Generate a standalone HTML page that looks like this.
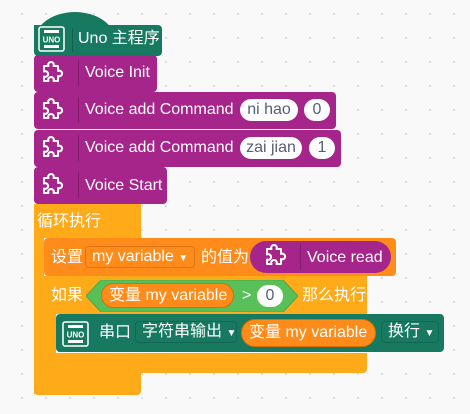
<!DOCTYPE html>
<html><head><meta charset="utf-8">
<style>
body{margin:0;width:470px;height:414px;background:#f9f9f9;position:relative;overflow:hidden;
font-family:"Liberation Sans","Noto Sans CJK SC",sans-serif;font-size:16px;color:#fff}
.a{position:absolute}
.t{position:absolute;white-space:nowrap;line-height:20px}
.pill{position:absolute;background:#fff;color:#575e75;border-radius:12px;text-align:center;line-height:22px;height:22px;font-size:16px}
.sep{position:absolute;width:1px;background:rgba(0,0,0,.2)}
.dd{position:absolute;border:1px solid rgba(0,0,0,.15);border-radius:4px;line-height:20px;height:20px;padding:0 6px;white-space:nowrap}
.dd small{font-size:10px}
.dot{background-image:radial-gradient(#ddd 1px,transparent 1.2px);background-size:24px 24px}
</style></head><body>
<div class="a dot" style="left:0;top:0;width:470px;height:414px;background-position:10px 2px"></div>

<!-- hat -->
<div class="a" style="left:34px;top:12px;width:82px;height:30px;background:#177a60;border-radius:50% 50% 0 0/100% 100% 0 0"></div>
<div class="a" style="left:34px;top:25px;width:128px;height:31px;background:#177a60;border-radius:0 4px 4px 4px"></div>
<svg class="a" style="left:38px;top:26px" width="27" height="26" viewBox="0 0 27 26"><rect x="1" y="1" width="25" height="24" rx="2" fill="none" stroke="#fff" stroke-width="1.5"/><rect x="6" y="4" width="15" height="3" fill="#fff"/><rect x="6" y="19" width="15" height="3" fill="#fff"/><text x="13.5" y="16.5" font-size="8" font-weight="bold" fill="#fff" text-anchor="middle" font-family="Liberation Sans">UNO</text></svg>
<div class="sep" style="left:72px;top:28px;height:24px"></div>
<div class="t" style="left:78px;top:29px">Uno 主程序</div>

<!-- purple blocks -->
<div class="a" style="left:34px;top:55px;width:123px;height:37px;background:#a5258a;border-radius:4px"></div>
<div class="a" style="left:34px;top:92px;width:302px;height:37px;background:#a5258a;border-radius:4px"></div>
<div class="a" style="left:34px;top:130px;width:307px;height:37px;background:#a5258a;border-radius:4px"></div>
<div class="a" style="left:34px;top:167px;width:133px;height:37px;background:#a5258a;border-radius:4px"></div>

<div class="sep" style="left:78px;top:60px;height:26px"></div>
<div class="sep" style="left:78px;top:97px;height:26px"></div>
<div class="sep" style="left:78px;top:135px;height:26px"></div>
<div class="sep" style="left:78px;top:172px;height:26px"></div>
<div class="t" style="left:85px;top:63px">Voice Init</div>
<div class="t" style="left:85px;top:100px">Voice add Command</div>
<div class="pill" style="left:240px;top:99px;width:58px">ni hao</div>
<div class="pill" style="left:304px;top:99px;width:26px">0</div>
<div class="t" style="left:85px;top:138px">Voice add Command</div>
<div class="pill" style="left:240px;top:137px;width:62px">zai jian</div>
<div class="pill" style="left:309px;top:137px;width:26px">1</div>
<div class="t" style="left:85px;top:176px">Voice Start</div>

<!-- loop -->
<div class="a" style="left:34px;top:204px;width:107px;height:34px;background:#ffab19"></div>
<div class="a" style="left:34px;top:204px;width:10px;height:190px;background:#ffab19"></div>
<div class="a" style="left:34px;top:373px;width:107px;height:22px;background:#ffab19;border-radius:0 0 4px 4px"></div>
<div class="t" style="left:37px;top:212px">循环执行</div>

<!-- set -->
<div class="a" style="left:44px;top:238px;width:352px;height:38px;background:#ff8c1a;border-radius:4px"></div>
<div class="t" style="left:51px;top:248px">设置</div>
<div class="dd" style="left:85px;top:246px;width:96px">my variable <small>▼</small></div>
<div class="t" style="left:201px;top:248px">的值为</div>
<div class="a" style="left:250px;top:241px;width:141px;height:32px;background:#a5258a;border-radius:16px"></div>
<div class="sep" style="left:300px;top:244px;height:26px"></div>
<div class="t" style="left:307px;top:248px">Voice read</div>

<!-- if -->
<div class="a" style="left:44px;top:276px;width:323px;height:38px;background:#ffab19"></div>
<div class="a" style="left:44px;top:276px;width:12px;height:97px;background:#ffab19"></div>
<div class="a" style="left:44px;top:353px;width:323px;height:20px;background:#ffab19;border-radius:0 0 4px 4px"></div>
<div class="t" style="left:51px;top:286px">如果</div>
<svg class="a" style="left:86px;top:280px" width="212" height="32"><polygon points="15,0 197,0 212,16 197,32 15,32 0,16" fill="#59c059" stroke="#4aa84a"/></svg>
<div class="a" style="left:101px;top:283px;width:133px;height:25px;background:#ff8c1a;border-radius:13px;border:1px solid #db6e00;box-sizing:border-box"></div>
<div class="t" style="left:109px;top:286px">变量 my variable</div>
<div class="t" style="left:242px;top:286px">&gt;</div>
<div class="pill" style="left:257px;top:285px;width:26px">0</div>
<div class="t" style="left:302px;top:286px">那么执行</div>

<!-- serial -->
<div class="a" style="left:56px;top:314px;width:388px;height:38px;background:#177a60;border-radius:4px"></div>
<svg class="a" style="left:62px;top:321px" width="27" height="26" viewBox="0 0 27 26"><rect x="1" y="1" width="25" height="24" rx="2" fill="none" stroke="#fff" stroke-width="1.5"/><rect x="6" y="4" width="15" height="3" fill="#fff"/><rect x="6" y="19" width="15" height="3" fill="#fff"/><text x="13.5" y="16.5" font-size="8" font-weight="bold" fill="#fff" text-anchor="middle" font-family="Liberation Sans">UNO</text></svg>
<div class="t" style="left:99px;top:323px">串口</div>
<div class="dd" style="left:135px;top:321px;width:88px">字符串输出 <small>▼</small></div>
<div class="a" style="left:241px;top:319px;width:135px;height:28px;background:#ff8c1a;border-radius:14px;border:1px solid #db6e00;box-sizing:border-box"></div>
<div class="t" style="left:249px;top:323px">变量 my variable</div>
<div class="dd" style="left:381px;top:321px;width:44px">换行 <small>▼</small></div>

<svg class="a" style="left:0;top:0" width="470" height="414">
<defs><path id="pz" d="M6 5h3.5a2.8 2.8 0 1 1 5 0H19v5a2.8 2.8 0 1 1 0 5V20h-4.5a2.8 2.8 0 1 0-5 0H5v-4.5a2.8 2.8 0 1 0 0-5V5z" fill="none" stroke="#fff" stroke-width="2" stroke-linejoin="round"/></defs>
<use href="#pz" x="39" y="61"/><use href="#pz" x="39" y="98"/><use href="#pz" x="39" y="136"/><use href="#pz" x="39" y="173"/><use href="#pz" x="262" y="244"/>
</svg>
</body></html>
